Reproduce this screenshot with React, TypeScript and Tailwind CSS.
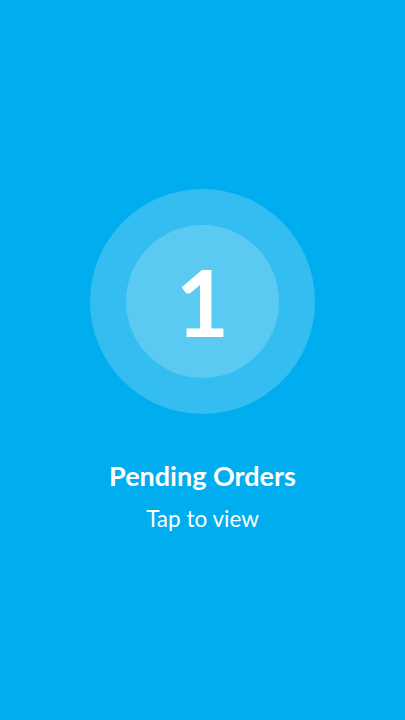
export default function App() {
  return (
    <div
      className="flex h-[720px] w-full flex-col items-center bg-[#00adee] pt-[189px] text-white"
      style={{ fontFamily: "Lato, 'Noto Sans', sans-serif" }}
    >
      <div className="flex h-[225px] w-[225px] items-center justify-center rounded-full bg-white/20">
        <div className="flex h-[153px] w-[153px] items-center justify-center rounded-full bg-white/20">
          <span className="text-[92px] font-bold leading-none">1</span>
        </div>
      </div>
      <h2 className="mt-[46px] text-[27px] font-bold leading-[32px]">Pending Orders</h2>
      <p className="mt-[13px] text-[22.5px] leading-[28px]">Tap to view</p>
    </div>
  );
}
